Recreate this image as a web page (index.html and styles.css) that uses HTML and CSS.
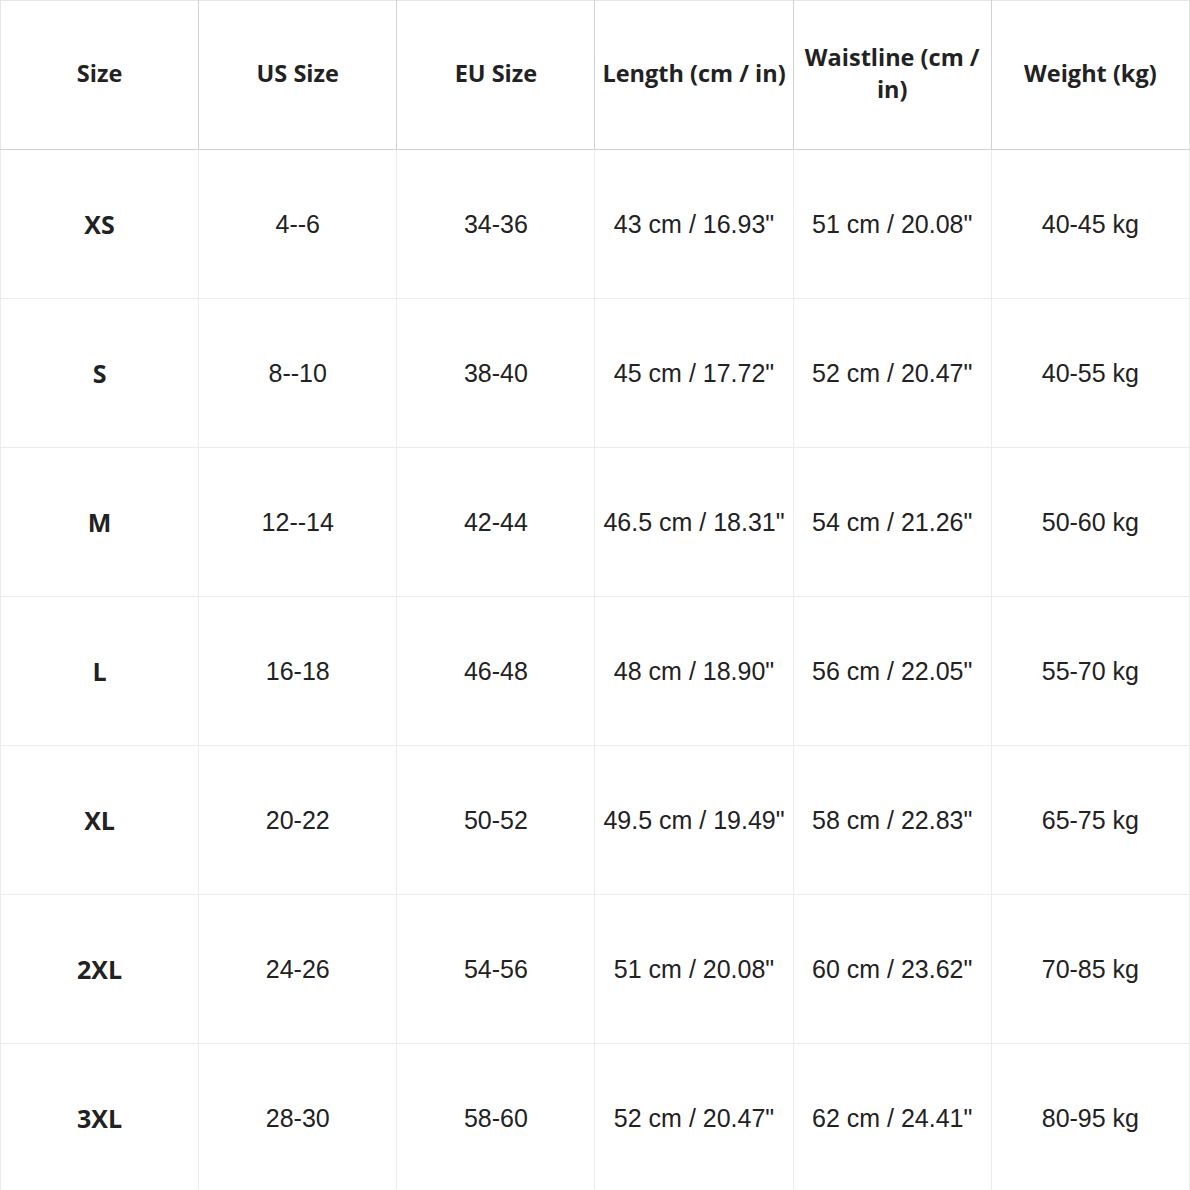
FILE: index.html
```html
<!DOCTYPE html>
<html>
<head>
<meta charset="utf-8">
<link rel="stylesheet" href="styles.css">
</head>
<body>
<table class="chart">
  <thead>
    <tr>
      <th>Size</th><th>US Size</th><th>EU Size</th><th>Length (cm / in)</th><th>Waistline (cm / in)</th><th>Weight (kg)</th>
    </tr>
  </thead>
  <tbody>
    <tr><td class="sz">XS</td><td>4--6</td><td>34-36</td><td>43 cm / 16.93"</td><td>51 cm / 20.08"</td><td>40-45 kg</td></tr>
    <tr><td class="sz">S</td><td>8--10</td><td>38-40</td><td>45 cm / 17.72"</td><td>52 cm / 20.47"</td><td>40-55 kg</td></tr>
    <tr><td class="sz">M</td><td>12--14</td><td>42-44</td><td>46.5 cm / 18.31"</td><td>54 cm / 21.26"</td><td>50-60 kg</td></tr>
    <tr><td class="sz">L</td><td>16-18</td><td>46-48</td><td>48 cm / 18.90"</td><td>56 cm / 22.05"</td><td>55-70 kg</td></tr>
    <tr><td class="sz">XL</td><td>20-22</td><td>50-52</td><td>49.5 cm / 19.49"</td><td>58 cm / 22.83"</td><td>65-75 kg</td></tr>
    <tr><td class="sz">2XL</td><td>24-26</td><td>54-56</td><td>51 cm / 20.08"</td><td>60 cm / 23.62"</td><td>70-85 kg</td></tr>
    <tr><td class="sz">3XL</td><td>28-30</td><td>58-60</td><td>52 cm / 20.47"</td><td>62 cm / 24.41"</td><td>80-95 kg</td></tr>
  </tbody>
</table>
</body>
</html>
```

FILE: styles.css
```css
html, body {
  margin: 0;
  padding: 0;
  background: #ffffff;
}
.chart {
  width: 1190px;
  height: 1190px;
  table-layout: fixed;
  border-collapse: collapse;
  color: #222222;
  font-family: "Liberation Sans", Arial, sans-serif;
}
.chart th, .chart td {
  text-align: center;
  vertical-align: middle;
  padding: 0 2px;
}
.chart td {
  height: 148px;
}
.chart th {
  height: 144px;
  font-family: "Open Sans", sans-serif;
  font-weight: 700;
  font-size: 23.5px;
  line-height: 32px;
  padding-bottom: 4px;
  border: 1.5px solid #d2d2d2;
  border-top-color: #e6e6e6;
}
.chart th:first-child { border-left-color: #e6e6e6; }
.chart th:last-child { border-right-color: #e6e6e6; }
.chart td {
  font-size: 25px;
  border: 1px solid #ececec;
}
.chart td.sz {
  font-family: "Open Sans", sans-serif;
  font-weight: 700;
  font-size: 25px;
}
```
